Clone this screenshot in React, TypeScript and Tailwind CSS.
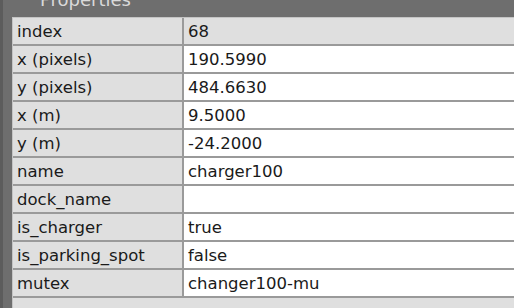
const rows: { key: string; value: string; readOnly?: boolean }[] = [
  { key: "index", value: "68", readOnly: true },
  { key: "x (pixels)", value: "190.5990" },
  { key: "y (pixels)", value: "484.6630" },
  { key: "x (m)", value: "9.5000" },
  { key: "y (m)", value: "-24.2000" },
  { key: "name", value: "charger100" },
  { key: "dock_name", value: "" },
  { key: "is_charger", value: "true" },
  { key: "is_parking_spot", value: "false" },
  { key: "mutex", value: "changer100-mu" },
];

export default function App() {
  return (
    <div
      className="w-[514px] h-[308px] overflow-hidden bg-[#6e6e6e] flex flex-col text-[#1a1a1a]"
      style={{ fontFamily: '"DejaVu Sans", "Open Sans", sans-serif' }}
    >
      {/* Dock title, scrolled partly out of view */}
      <div className="h-[17px] shrink-0 overflow-hidden border-l-[3px] border-[#5c5c5c]">
        <div className="pl-[37px] -mt-[12px] text-[18px] leading-[24px] text-[#d9d9d9]">Properties</div>
      </div>
      <div className="flex flex-1 min-h-0 border-l-[3px] border-[#5c5c5c]">
        <div className="w-[9px] shrink-0" />
        <div className="flex-1 flex flex-col bg-[#dfdfdf] border-l border-t border-[#c4c4c4]">
          {rows.map((r) => (
            <div key={r.key} className="flex h-[28px] shrink-0 border-b-2 border-[#9a9a9a]">
              <div className="w-[171px] shrink-0 pl-[4px] pt-[1px] text-[16.5px] leading-[26px] border-r-2 border-[#9a9a9a] whitespace-nowrap">
                {r.key}
              </div>
              <div
                className={`flex-1 pl-[4px] pt-[1px] text-[16.5px] leading-[26px] whitespace-nowrap ${r.readOnly ? "bg-[#dfdfdf]" : "bg-white"}`}
              >
                {r.value}
              </div>
            </div>
          ))}
          <div className="flex-1" />
        </div>
      </div>
    </div>
  );
}
